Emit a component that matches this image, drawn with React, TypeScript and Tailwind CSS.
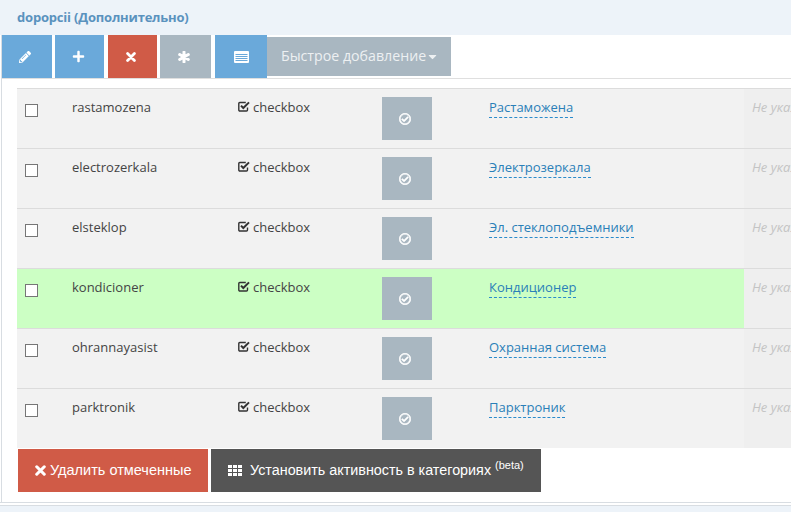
import { FaPencilAlt, FaPlus, FaRegCheckCircle, FaCaretDown } from "react-icons/fa"

const rows = [
  { name: "rastamozena", label: "Растаможена" },
  { name: "electrozerkala", label: "Электрозеркала" },
  { name: "elsteklop", label: "Эл. стеклоподъемники" },
  { name: "kondicioner", label: "Кондиционер", active: true },
  { name: "ohrannayasist", label: "Охранная система" },
  { name: "parktronik", label: "Парктроник" },
]

function ListIcon() {
  return (
    <svg width="15" height="12" viewBox="0 0 15 12" className="block">
      <rect x="0" y="0" width="15" height="12" rx="1" fill="#fff" />
      <path d="M1.5 3.5h12M1.5 5.5h12M1.5 7.5h12M1.5 9.5h12" stroke="#6aa9da" strokeWidth="1" />
    </svg>
  )
}

function TimesIcon({ size }: { size: number }) {
  return (
    <svg width={size} height={size} viewBox="0 0 10 10" className="block">
      <path d="M1.6 1.6l6.8 6.8M8.4 1.6l-6.8 6.8" stroke="#fff" strokeWidth="2.8" strokeLinecap="round" fill="none" />
    </svg>
  )
}

function AsteriskIcon() {
  return (
    <svg width="12" height="12" viewBox="0 0 12 12" className="block">
      <path d="M6 1v10M1.7 3.5l8.6 5M10.3 3.5l-8.6 5" stroke="#fff" strokeWidth="3" strokeLinecap="round" fill="none" />
    </svg>
  )
}

function GridIcon() {
  return (
    <svg width="14" height="11" viewBox="0 0 14 11" className="block">
      <path
        d="M0 0h4v3H0zM5 0h4v3H5zM10 0h4v3h-4zM0 4h4v3H0zM5 4h4v3H5zM10 4h4v3h-4zM0 8h4v3H0zM5 8h4v3H5zM10 8h4v3h-4z"
        fill="#fff"
      />
    </svg>
  )
}

// same shape as the old font-awesome check-square-o, heavier than the react-icons one
function CheckSquareIcon() {
  return (
    <svg width="12" height="11" viewBox="0 0 12 11" className="mt-[3px] block shrink-0">
      <path d="M9.5 6.5V9a1 1 0 0 1-1 1H1.8a1 1 0 0 1-1-1V2.5a1 1 0 0 1 1-1h6" stroke="#333" strokeWidth="1.4" fill="none" />
      <path d="M3 4.6l2.3 2.4L11 1.4" stroke="#333" strokeWidth="2" fill="none" />
    </svg>
  )
}

function Row({ name, label, active }: { name: string; label: string; active?: boolean }) {
  return (
    <div className={`flex h-[60px] border-t border-[#dcdcdc] ${active ? "" : "bg-[#f2f2f2]"}`}>
      <div className={`flex w-[727px] shrink-0 ${active ? "bg-[#ccffc4]" : ""}`}>
        <div className="w-[55px] shrink-0 pl-2 pt-[15px]">
          <div className="h-[13px] w-[13px] border border-[#767676] bg-white" />
        </div>
        <div className="w-[166px] shrink-0 pt-[9px] text-[13px] leading-[18px] text-[#444]">{name}</div>
        <div className="flex w-[144px] shrink-0 items-start gap-[3px] pt-[9px] text-[13px] leading-[18px] text-[#444]">
          <CheckSquareIcon />
          checkbox
        </div>
        <div className="w-[107px] shrink-0 pt-2">
          <div className="flex h-[43px] w-[50px] items-center justify-center bg-[#a9b7c1] pr-1 text-white">
            <FaRegCheckCircle className="text-[12px]" stroke="currentColor" strokeWidth={24} />
          </div>
        </div>
        <div className="pt-[5px]">
          <span className="border-b border-dashed border-[#2a8bcc] pb-px text-[13px] leading-[18px] text-[#2a7fb8]">
            {label}
          </span>
        </div>
      </div>
      <div className="flex-1 overflow-hidden whitespace-nowrap bg-[#efefef] pl-2 pt-[9px] text-[13px] italic leading-[18px] text-[#c4c4c4]">
        Не указано
      </div>
    </div>
  )
}

export default function App() {
  return (
    <div className="h-[512px] w-[791px] overflow-hidden bg-white font-['Open_Sans',sans-serif]">
      <div className="flex h-[35px] items-center bg-[#edf3f9] pl-[17px] text-[13px] font-bold tracking-[-0.2px] text-[#5a92be]">
        dopopcii (Дополнительно)
      </div>
      <div className="ml-px h-[467px] border-l border-[#d8dde2]">
        <div className="flex h-[44px] items-start border-b border-[#dfdfdf]">
          <button className="flex h-[43px] w-[50px] items-center justify-center bg-[#6aa9da] pr-1 text-[12px] text-white">
            <FaPencilAlt />
          </button>
          <button className="ml-[3px] flex h-[43px] w-[49px] items-center justify-center bg-[#6aa9da] pr-[2px] text-[13px] text-white">
            <FaPlus />
          </button>
          <button className="ml-1 flex h-[43px] w-[49px] items-center justify-center bg-[#d05b47] pr-1">
            <TimesIcon size={10} />
          </button>
          <button className="ml-[3px] flex h-[43px] w-[51px] items-center justify-center bg-[#a9b7c1] pr-1">
            <AsteriskIcon />
          </button>
          <button className="ml-1 flex h-[43px] w-[52px] items-center justify-center bg-[#6aa9da]">
            <ListIcon />
          </button>
          <button className="mt-[2px] flex h-[39px] w-[184px] items-center bg-[#a9b7c1] pb-px pl-[14px] text-[14.2px] text-[#edf0f2]">
            Быстрое добавление
            <FaCaretDown className="text-[13px]" />
          </button>
        </div>
        <div className="ml-[15px] mt-[9px]">
          {rows.map((r) => (
            <Row key={r.name} {...r} />
          ))}
        </div>
        <div className="ml-[16px] mt-px flex gap-[3px] text-white">
          <button className="flex h-[43px] w-[190px] items-center gap-[4px] bg-[#d05b47] pl-[17px] font-['Liberation_Sans',sans-serif] text-[14.5px]">
            <TimesIcon size={11} />
            Удалить отмеченные
          </button>
          <button className="flex h-[43px] w-[330px] items-center gap-2 bg-[#555] pl-[17px] font-['Liberation_Sans',sans-serif] text-[14.35px]">
            <GridIcon />
            <span>
              Установить активность в категориях <sup className="text-[11px]">(beta)</sup>
            </span>
          </button>
        </div>
      </div>
      <div className="h-[3px] border-t border-[#d8dde2] bg-white" />
      <div className="h-[7px] border-t border-[#d8dde2] bg-[#edf3f9]" />
    </div>
  )
}
